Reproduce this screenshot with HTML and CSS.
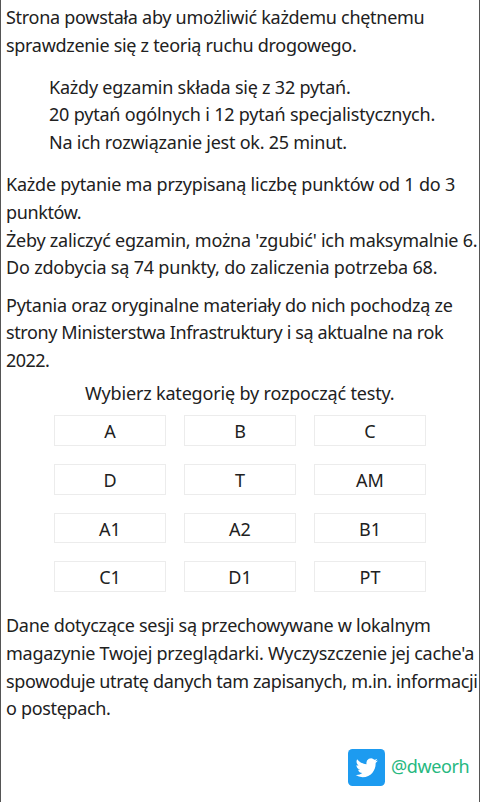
FILE: index.html
```html
<!DOCTYPE html>
<html lang="pl">
<head>
<meta charset="utf-8">
<title>Testy na prawo jazdy</title>
<link rel="stylesheet" href="styles.css">
</head>
<body>
<main class="page">
<p class="intro"><span class="l1">Strona powstała aby umożliwić każdemu chętnemu</span><br><span class="l2">sprawdzenie się z teorią ruchu drogowego.</span></p>
<p class="exam"><span class="l3">Każdy egzamin składa się z 32 pytań.</span><br><span class="l4">20 pytań ogólnych i 12 pytań specjalistycznych.</span><br><span class="l5">Na ich rozwiązanie jest ok. 25 minut.</span></p>
<p class="points"><span class="l6">Każde pytanie ma przypisaną liczbę punktów od 1 do 3</span><br><span class="l7">punktów.</span><br><span class="l8">Żeby zaliczyć egzamin, można 'zgubić' ich maksymalnie 6.</span><br><span class="l9">Do zdobycia są 74 punkty, do zaliczenia potrzeba 68.</span></p>
<p class="source"><span class="l10">Pytania oraz oryginalne materiały do nich pochodzą ze</span><br><span class="l11">strony Ministerstwa Infrastruktury i są aktualne na rok</span><br><span class="l12">2022.</span></p>
<p class="choose"><span class="l13">Wybierz kategorię by rozpocząć testy.</span></p>
<nav class="categories">
<a>A</a><a>B</a><a>C</a>
<a>D</a><a>T</a><a>AM</a>
<a>A1</a><a>A2</a><a>B1</a>
<a>C1</a><a>D1</a><a>PT</a>
</nav>
<p class="session"><span class="l14">Dane dotyczące sesji są przechowywane w lokalnym</span><br><span class="l15">magazynie Twojej przeglądarki. Wyczyszczenie jej cache'a</span><br><span class="l16">spowoduje utratę danych tam zapisanych, m.in. informacji</span><br><span class="l17">o postępach.</span></p>
<footer class="contact">
<svg class="logo" viewBox="0 0 37 37" aria-hidden="true"><rect width="37" height="37" rx="4.5" fill="#1d9bf0"/><path fill="#fff" transform="translate(7.6 7.1) scale(.93 .97)" d="M23.953 4.57a10 10 0 01-2.825.775 4.958 4.958 0 002.163-2.723c-.951.555-2.005.959-3.127 1.184a4.92 4.92 0 00-8.384 4.482C7.69 8.095 4.067 6.13 1.64 3.162a4.822 4.822 0 00-.666 2.475c0 1.71.87 3.213 2.188 4.096a4.904 4.904 0 01-2.228-.616v.06a4.923 4.923 0 003.946 4.827 4.996 4.996 0 01-2.212.085 4.936 4.936 0 004.604 3.417 9.867 9.867 0 01-6.102 2.105c-.39 0-.779-.023-1.17-.067a13.995 13.995 0 007.557 2.209c9.053 0 13.998-7.496 13.998-13.985 0-.21 0-.42-.015-.63A9.935 9.935 0 0024 4.59z"/></svg>
<a class="handle">@dweorh</a>
</footer>
</main>
</body>
</html>
```
FILE: styles.css
```css
* { box-sizing: border-box; }
body { margin: 0; background: #fff; color: #212121; font: 18px/27.8px "Noto Sans", "Open Sans", sans-serif; }
.page { height: 802px; padding: 4px 0 0 5px; border-left: 1px solid #555; border-right: 1px solid #555; overflow: hidden; }
p { margin: 0; white-space: nowrap; }
.l1 { letter-spacing: -.285px; }
.l2 { letter-spacing: -.3px; }
.l3 { letter-spacing: -.22px; }
.l4 { letter-spacing: -.2px; }
.l5 { letter-spacing: -.24px; }
.l6 { letter-spacing: -.22px; }
.l7 { letter-spacing: -.38px; }
.l8 { letter-spacing: -.24px; }
.l9 { letter-spacing: -.19px; }
.l10 { letter-spacing: -.255px; }
.l11 { letter-spacing: -.39px; }
.l12 { letter-spacing: -.55px; }
.l13 { letter-spacing: -.175px; }
.l14 { letter-spacing: -.3px; }
.l15 { letter-spacing: -.275px; }
.l16 { letter-spacing: -.36px; }
.l17 { letter-spacing: -.33px; }
.exam { margin: 14px 0 0 43px; }
.points { margin-top: 14px; }
.source { margin-top: 9.5px; }
.choose { margin: 5px 0 0 79px; }
.categories { display: grid; grid-template-columns: repeat(3, 112px); grid-auto-rows: 30.7px; gap: 18px; margin: 7.5px 0 0 48px; }
.categories a { border: 1px solid #ececec; text-align: center; line-height: 31px; }
.session { margin-top: 20px; line-height: 27.7px; }
.contact { display: flex; align-items: center; gap: 6px; margin: 26.5px 0 0 342px; }
.logo { width: 37px; height: 37px; flex: none; }
.handle { color: #27b880; letter-spacing: -.4px; margin-top: -2px; }
```
